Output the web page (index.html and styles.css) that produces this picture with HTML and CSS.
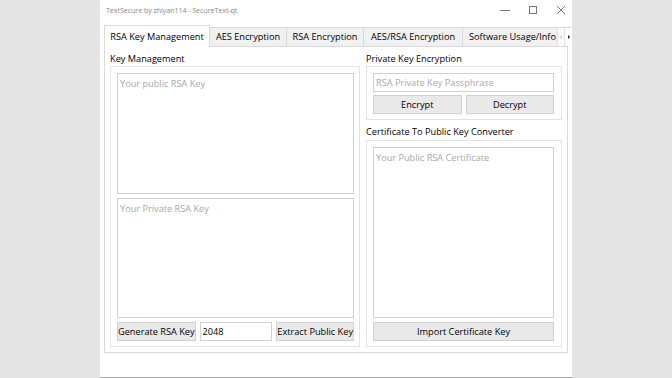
FILE: index.html
```html
<!DOCTYPE html>
<html lang="en">
<head>
	<meta charset="UTF-8">
	<title>TextSecure by zhiyan114 - SecureText-qt</title>
	<link rel="stylesheet" href="styles.css">
</head>
<body>
	<main class="window">
		<header class="titlebar">
			<span class="title">TextSecure by zhiyan114 - SecureText-qt</span>
			<div class="controls">
				<svg width="10" height="10" viewBox="0 0 10 10"><path d="M0 5.5h10" stroke="#777" stroke-width="1"/></svg>
				<svg width="10" height="10" viewBox="0 0 10 10"><rect x="1.5" y="1.5" width="7" height="7" fill="none" stroke="#777" stroke-width="1"/></svg>
				<svg width="10" height="10" viewBox="0 0 10 10"><path d="M1 1l8 8M9 1l-8 8" stroke="#777" stroke-width="1"/></svg>
			</div>
		</header>
		<nav class="tabs">
			<div class="tab active w1">RSA Key Management</div>
			<div class="tab w2">AES Encryption</div>
			<div class="tab w2">RSA Encryption</div>
			<div class="tab w3">AES/RSA Encryption</div>
			<div class="tab clip">Software Usage/Info</div>
			<div class="scroll">
				<span class="arrow left"></span>
				<span class="arrow right"></span>
			</div>
		</nav>
		<section class="pane">
			<div class="col left">
				<div class="label">Key Management</div>
				<div class="group fill">
					<div class="area">Your public RSA Key</div>
					<div class="area">Your Private RSA Key</div>
					<div class="row">
						<button class="btn gen">Generate RSA Key</button>
						<div class="field num">2048</div>
						<button class="btn ext">Extract Public Key</button>
					</div>
				</div>
			</div>
			<div class="col right">
				<div class="label">Private Key Encryption</div>
				<div class="group">
					<div class="field hint">RSA Private Key Passphrase</div>
					<div class="row">
						<button class="btn half">Encrypt</button>
						<button class="btn half">Decrypt</button>
					</div>
				</div>
				<div class="label second">Certificate To Public Key Converter</div>
				<div class="group fill">
					<div class="area">Your Public RSA Certificate</div>
					<button class="btn wide">Import Certificate Key</button>
				</div>
			</div>
		</section>
	</main>
</body>
</html>
```

FILE: styles.css
```css
* {
	box-sizing: border-box;
}
body {
	background-color: #e4e4e4;
	font-family: "Open Sans", "Noto Sans", sans-serif;
	font-size: 9.2px;
	margin: 0px;
}
main.window {
	background-color: #fff;
	border-bottom: 1px solid #a8a8a8;
	height: 378px;
	margin-left: 100px;
	width: 472px;
	display: flex;
	flex-direction: column;
}
/* titlebar */
header.titlebar {
	height: 20px;
	display: flex;
	align-items: center;
	justify-content: space-between;
	padding-left: 6px;
}
header.titlebar .title {
	color: #8a8a8a;
	font-size: 7.2px;
	letter-spacing: -0.1px;
}
header.titlebar .controls {
	display: flex;
	gap: 18px;
	padding-right: 6px;
}
/* tabs */
nav.tabs {
	display: flex;
	align-items: flex-end;
	height: 26px;
	padding-left: 4px;
	position: relative;
	z-index: 1;
}
nav.tabs .tab {
	background-color: #f0f0f0;
	border: 1px solid #d9d9d9;
	border-bottom: none;
	border-left: none;
	color: #000;
	height: 19px;
	line-height: 18px;
	padding: 0px;
	text-align: center;
	white-space: nowrap;
}
nav.tabs .tab.w1 { width: 106px; }
nav.tabs .tab.w2 { width: 77px; }
nav.tabs .tab.w3 { width: 99px; }
nav.tabs .tab.active {
	background-color: #fff;
	border-left: 1px solid #d9d9d9;
	height: 22px;
	line-height: 21px;
	margin-bottom: -1px;
}
nav.tabs .tab.clip {
	overflow: hidden;
	width: 94px;
	padding-left: 6px;
	text-align: left;
	border-right: none;
}
nav.tabs .scroll {
	display: flex;
	height: 19px;
	align-items: stretch;
	border-top: 1px solid #d9d9d9;
	background-color: #f0f0f0;
}
nav.tabs .arrow {
	width: 7px;
	display: flex;
	align-items: center;
	justify-content: center;
	border-left: 1px solid #e2e2e2;
	background-color: #fdfdfd;
}
nav.tabs .arrow.left::after {
	content: "";
	border: 2px solid transparent;
	border-right-color: #c8c8c8;
	margin-left: -2px;
}
nav.tabs .arrow.right::after {
	content: "";
	border: 2.5px solid transparent;
	border-left-color: #222;
	margin-right: -3px;
}
/* pane */
section.pane {
	border: 1px solid #d9d9d9;
	height: 307px;
	margin: 0px 4px;
	padding: 4px 5px 5px 5px;
	display: flex;
	gap: 6px;
}
.col {
	display: flex;
	flex-direction: column;
}
.col.left {
	width: 250px;
}
.col.right {
	width: 197px;
}
.label {
	color: #000;
	height: 15px;
	line-height: 16px;
	white-space: nowrap;
}
.label.second {
	height: 20px;
	line-height: 23px;
}
.group {
	border: 1px solid #e3e3e3;
	display: flex;
	flex-direction: column;
	gap: 3px;
	padding: 6px 7px 5px 6px;
}
.group.fill {
	flex: 1;
	gap: 4px;
}
.col.left .group {
	padding-right: 5px;
}
.area {
	border: 1px solid #d0d0d0;
	color: #a8a8a8;
	flex: 1;
	padding: 3px 2px;
}
.row {
	display: flex;
	gap: 4px;
	height: 19px;
}
.field {
	border: 1px solid #d0d0d0;
	height: 19px;
	line-height: 17px;
	padding: 0px 2px;
}
.field.hint {
	color: #a8a8a8;
}
.field.num {
	width: 74px;
	color: #000;
}
.btn {
	background-color: #e9e9e9;
	border: 1px solid #d0d0d0;
	color: #000;
	font-family: inherit;
	font-size: 9.2px;
	height: 19px;
	padding: 0px;
	white-space: nowrap;
}
.btn.gen {
	width: 79px;
}
.btn.ext {
	flex: 1;
}
.btn.half {
	flex: 1;
}
.btn.wide {
	flex: none;
}
```
